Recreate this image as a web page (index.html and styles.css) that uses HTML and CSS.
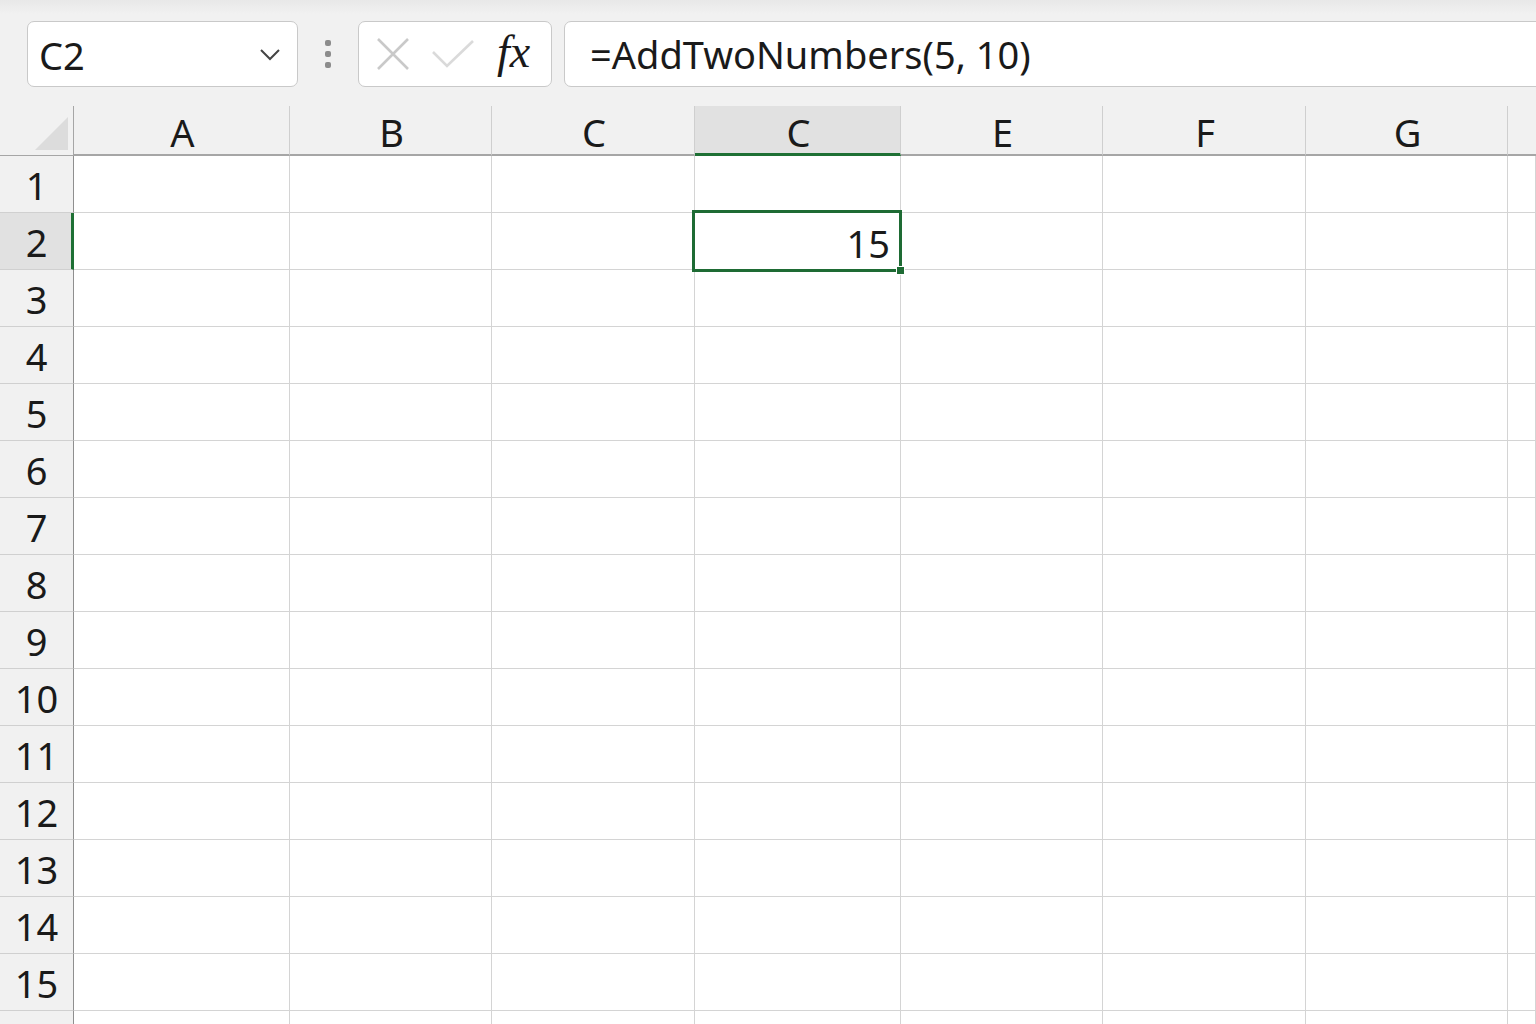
FILE: index.html
```html
<!DOCTYPE html>
<html>
<head>
<meta charset="utf-8">
<link rel="stylesheet" href="styles.css">
</head>
<body>
<div class="app">
  <div class="toolbar">
    <div class="namebox">
      <span class="name">C2</span>
      <svg class="chev" width="22" height="14" viewBox="0 0 22 14"><path d="M2 2 L11 11 L20 2" fill="none" stroke="#444" stroke-width="2"/></svg>
    </div>
    <div class="dots"><span></span><span></span><span></span></div>
    <div class="fxbox">
      <svg class="ico" width="36" height="36" viewBox="0 0 36 36"><path d="M3 3 L33 33 M33 3 L3 33" stroke="#c9c9c9" stroke-width="2.6" fill="none"/></svg>
      <svg class="ico" width="44" height="30" viewBox="0 0 44 30"><path d="M2 13 L16 27 L42 2" stroke="#dadada" stroke-width="2.6" fill="none"/></svg>
      <span class="fx">fx</span>
    </div>
    <div class="formula">=AddTwoNumbers(5, 10)</div>
  </div>
  <div class="sheet">
    <div class="hdr corner"><span class="tri"></span></div>
    <div class="hdr col">A</div>
    <div class="hdr col">B</div>
    <div class="hdr col">C</div>
    <div class="hdr col sel-col">C</div>
    <div class="hdr col">E</div>
    <div class="hdr col">F</div>
    <div class="hdr col">G</div>
    <div class="hdr col last"></div>
  </div>
  <div class="sheet body" id="body"></div>
</div>
<script>
  var body = document.getElementById('body');
  var html = '';
  for (var r = 1; r <= 16; r++) {
    html += '<div class="rowhdr' + (r === 2 ? ' sel-row' : '') + '">' + (r <= 15 ? r : '') + '</div>';
    for (var c = 0; c < 8; c++) {
      if (r === 2 && c === 3) {
        html += '<div class="cell active"><span class="val">15</span><div class="selbox"><span class="handle"></span></div></div>';
      } else {
        html += '<div class="cell"></div>';
      }
    }
  }
  body.innerHTML = html;
</script>
</body>
</html>
```

FILE: styles.css
```css
html, body {
  margin: 0;
  padding: 0;
  background: #f0f0f0;
  overflow: hidden;
}
body {
  width: 1536px;
  height: 1024px;
  font-family: "Noto Sans", "Open Sans", sans-serif;
  color: #1a1a1a;
}
.app {
  width: 1536px;
  height: 1024px;
  overflow: hidden;
  background: linear-gradient(#e8e8e8 0px, #f1f1f1 14px, #f1f1f1 100%);
}
.toolbar {
  height: 106px;
  box-sizing: border-box;
  padding-top: 21px;
  padding-left: 27px;
  display: flex;
  align-items: flex-start;
}
.namebox, .fxbox, .formula {
  height: 66px;
  box-sizing: border-box;
  background: #fff;
  border: 1px solid #c9c9c9;
  border-radius: 7px;
  display: flex;
  align-items: center;
}
.namebox {
  width: 271px;
  padding-left: 11px;
  padding-right: 16px;
  justify-content: space-between;
}
.name {
  font-size: 38px;
  line-height: 1;
  margin-top: 2px;
}
.chev { margin-top: 2px; }
.dots {
  width: 60px;
  height: 66px;
  display: flex;
  flex-direction: column;
  align-items: center;
  justify-content: center;
  gap: 5px;
}
.dots span {
  width: 6px;
  height: 6px;
  border-radius: 2px;
  background: #8c8c8c;
}
.fxbox {
  width: 194px;
  padding-left: 16px;
  gap: 20px;
}
.fx {
  font-family: "Liberation Serif", "DejaVu Serif", serif;
  font-style: italic;
  font-size: 46px;
  line-height: 1;
  margin-left: 2px;
  margin-top: -4px;
  color: #1a1a1a;
}
.formula {
  flex: 1;
  margin-left: 12px;
  margin-right: -20px;
  padding-left: 25px;
  font-size: 38px;
  line-height: 1;
}
.sheet {
  display: grid;
  grid-template-columns: 74px 216px 202px 203px 206px 202px 203px 202px 1fr;
}
.hdr {
  height: 50px;
  box-sizing: border-box;
  border-bottom: 2px solid #a6a6a6;
  border-right: 1px solid #cfcfcf;
  font-size: 38px;
  line-height: 1;
  display: flex;
  align-items: center;
  justify-content: center;
  padding-top: 4px;
  padding-left: 2px;
}
.hdr.corner {
  border-right: 1px solid #a6a6a6;
  border-bottom: 1px solid #a6a6a6;
  position: relative;
}
.tri {
  position: absolute;
  right: 5px;
  bottom: 5px;
  width: 0;
  height: 0;
  border-left: 33px solid transparent;
  border-bottom: 33px solid #dcdcdc;
}
.hdr.last { border-right: none; }
.hdr.sel-col {
  background: #e1e1e1;
  border-bottom: 3px solid #1e7034;
}
.body .rowhdr {
  height: 57px;
  box-sizing: border-box;
  border-bottom: 1px solid #d0d0d0;
  border-right: 1px solid #8f8f8f;
  font-size: 38px;
  line-height: 1;
  display: flex;
  align-items: center;
  justify-content: center;
  padding-top: 2px;
}
.body .rowhdr.sel-row {
  background: #e1e1e1;
  border-right: 3px solid #1e7034;
  padding-left: 2px;
}
.cell {
  height: 57px;
  box-sizing: border-box;
  background: #fff;
  border-right: 1px solid #d4d4d4;
  border-bottom: 1px solid #d4d4d4;
}
.cell.active {
  position: relative;
  display: flex;
  align-items: center;
  justify-content: flex-end;
  padding-right: 10px;
  padding-top: 3px;
}
.val {
  font-size: 38px;
  line-height: 1;
}
.selbox {
  position: absolute;
  left: -3px;
  top: -3px;
  right: -2px;
  bottom: -3px;
  border: 3px solid #1e6b34;
}
.handle {
  position: absolute;
  right: -6px;
  bottom: -6px;
  width: 7px;
  height: 7px;
  background: #1e6b34;
  border: 1px solid #fff;
}
```
